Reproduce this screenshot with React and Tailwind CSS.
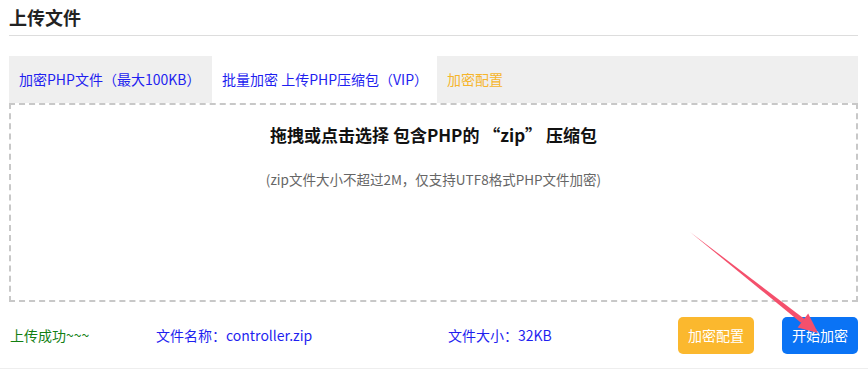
import React from "react";

const font = { fontFamily: '"Noto Sans CJK SC", "Liberation Sans", sans-serif' };

const Arrow = () => (
  <svg
    className="pointer-events-none absolute left-0 top-0"
    width="868"
    height="369"
    viewBox="0 0 868 369"
  >
    <polygon points="690,232 804.5,318.9 801.3,322.9" fill="#f4506c" />
    <polygon points="818,333 797.6,327.4 808.2,313.4" fill="#f4506c" />
  </svg>
);

export default function App() {
  return (
    <div className="relative w-[868px] h-[369px] bg-white overflow-hidden" style={font}>
      <div className="pl-[9px] pr-[10px]">
        <div className="h-[36px] border-b border-[#dddddd] pt-[4px]">
          <h2 className="text-[18px] font-bold text-[#222] leading-[26px]">上传文件</h2>
        </div>

        <div className="mt-[20px] h-[47px] flex bg-[#efefef] text-[14px]">
          <div className="w-[203px] flex items-center pl-[10px] text-[#1f1ff0]">
            加密PHP文件（最大100KB）
          </div>
          <div className="w-[225px] flex items-center pl-[10px] bg-white text-[#1f1ff0]">
            批量加密 上传PHP压缩包（VIP）
          </div>
          <div className="flex items-center pl-[10px] text-[#f6b52c]">加密配置</div>
        </div>

        <div className="h-[199px] border-2 border-dashed border-[#c8c8c8] flex flex-col items-center">
          <div className="mt-[17px] text-[17px] font-bold text-[#111] leading-[26px]">
            拖拽或点击选择 包含PHP的 “zip” 压缩包
          </div>
          <div className="mt-[20px] text-[13.5px] text-[#666] leading-[22px]">
            (zip文件大小不超过2M，仅支持UTF8格式PHP文件加密)
          </div>
        </div>

        <div className="h-[66px] flex items-center text-[14px]">
          <span className="w-[147px] pl-[1px] text-[#128012]">上传成功~~~</span>
          <span className="w-[292px] text-[#1f1ff0]">文件名称：controller.zip</span>
          <span className="text-[#1f1ff0]">文件大小：32KB</span>
          <div className="ml-auto flex gap-[28px]">
            <button className="w-[76px] h-[37px] rounded-[5px] bg-[#fbb82e] text-white text-[14px]">
              加密配置
            </button>
            <button className="w-[76px] h-[37px] rounded-[5px] bg-[#0a73f5] text-white text-[14px]">
              开始加密
            </button>
          </div>
        </div>
      </div>
      <div className="border-t border-[#eeeeee]" />
      <Arrow />
    </div>
  );
}
